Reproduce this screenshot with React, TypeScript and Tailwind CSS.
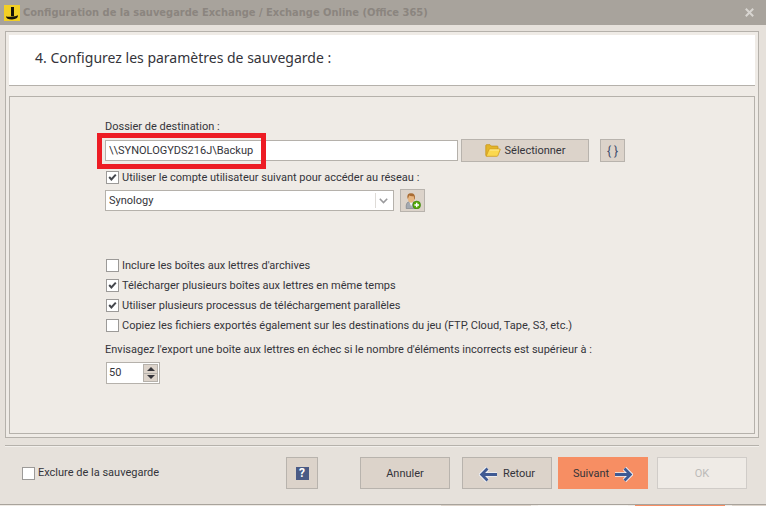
// App.tsx
import { useState } from 'react';
import type { ReactNode } from 'react';

interface OptionProps {
  label: string;
  defaultChecked?: boolean;
}

const BUTTON = 'flex items-center justify-center border border-[#b8b3ad] bg-[#dcd3ca]';

function Option({ label, defaultChecked = false }: OptionProps) {
  return (
    <label className="flex h-[19px] w-fit items-center gap-[3px] whitespace-nowrap">
      <span className="relative block h-[13px] w-[13px] shrink-0">
        <input
          type="checkbox"
          defaultChecked={defaultChecked}
          className="peer block h-[13px] w-[13px] appearance-none border border-[#9c9a98] bg-white"
        />
        <svg viewBox="0 0 13 13" className="pointer-events-none absolute inset-0 hidden peer-checked:block" fill="none" stroke="#45474d" strokeWidth="2">
          <path d="M3.2 6 5.4 8.4 9.8 3.6" />
        </svg>
      </span>
      {label}
    </label>
  );
}

function FolderIcon() {
  return (
    <svg width="16" height="13" viewBox="0 0 16 13">
      <path d="M.8 11.5V1.5Q.8.7 1.6.7H5l1.4 1.4h5.8q.8 0 .8.8V5L3 11.8Z" fill="#e3b52b" stroke="#c8951d" strokeWidth=".8" />
      <path d="M1.2 12.3 3.9 5.6Q4.1 5 4.8 5h10q.7 0 .4.7L12.9 11.6q-.3.7-1 .7Z" fill="#fbd84e" stroke="#d09c20" strokeWidth=".8" />
      <path d="M4.8 6h9.2" stroke="#fff0a0" strokeWidth=".9" />
    </svg>
  );
}

function AddUserIcon() {
  return (
    <svg width="16" height="16" viewBox="0 0 16 16">
      <path d="M1.2 15.5Q.8 9.5 3.5 9h5q2.7.5 2.5 6.5Z" fill="#a4a9b0" stroke="#777d86" strokeWidth=".6" />
      <path d="m4.3 8.8 1.9 4.7L8 8.8Z" fill="#f0f1f3" />
      <path d="M2.8 2.5h6.6v3.6Q8.8 9.8 6.1 9.8 3.4 9.8 2.8 6.1Z" fill="#e8b681" />
      <path d="M2.5 5.4Q1.5.3 6 .2q4.8 0 3.8 5.6L9.2 7 8.8 3.2Q5 3.4 4.2 2.6L3 5.4Z" fill="#a96b32" />
      <circle cx="11.7" cy="12" r="3.9" fill="#55a80a" stroke="#2f7900" strokeWidth=".5" />
      <path d="M11.7 9.7v4.6M9.4 12H14" stroke="#fff" strokeWidth="1.4" />
    </svg>
  );
}

function ArrowIcon({ back = false }: { back?: boolean }) {
  const shaft = back ? 'M18 7.5H2.5M8.5 1.5 2.6 7.5l5.9 6' : 'M2 7.5h15.5M11.5 1.5l5.9 6-5.9 6';
  return (
    <svg width="20" height="15" viewBox="0 0 20 15" fill="none">
      <path d={shaft} stroke="#f1f3f8" strokeWidth="4.6" />
      <path d={shaft} stroke="#3f5a93" strokeWidth="2.8" />
    </svg>
  );
}

function FooterButton({ children, className }: { children: ReactNode; className: string }) {
  return (
    <button type="button" className={`flex h-8 w-[90px] items-center justify-center gap-1 border pt-0.5 ${className}`}>
      {children}
    </button>
  );
}

export default function App() {
  const [folder, setFolder] = useState('\\\\SYNOLOGYDS216J\\Backup');
  const [limit, setLimit] = useState(50);

  return (
    <div className="bg-[#e6e1db] font-['Roboto','Liberation_Sans',sans-serif] text-[11px] leading-4 text-[#34343a]">
      {/* Title bar */}
      <header className="flex h-[25px] items-center bg-[#a8a39c] pr-3 pl-1">
        <svg width="16" height="16" viewBox="0 0 16 16" className="mr-[3px]">
          <rect width="16" height="16" fill="#f2cf25" />
          <path d="M7 2h3v9H7Z" fill="#15130b" />
          <path d="M2 11.2Q4 12.2 8 11.6q3.5-.1 6-1.4.2 4-6 4.2-5.8 0-6-3.2Z" fill="#15130b" />
        </svg>
        <h1 className="grow font-['DejaVu_Sans_Condensed','DejaVu_Sans',sans-serif] font-bold text-[#8b857f]">
          Configuration de la sauvegarde Exchange / Exchange Online (Office 365)
        </h1>
        <button type="button" aria-label="Fermer">
          <svg width="9" height="9" viewBox="0 0 9 9" stroke="#d8d5d1" strokeWidth="2">
            <path d="m.8.8 7.4 7.4M8.2.8.8 8.2" />
          </svg>
        </button>
      </header>

      {/* Wizard page */}
      <main className="mx-[5px] mt-1.5 mr-[7px] border border-[#b5b1ab] bg-[#efebe6] p-[3px]">
        <div className="flex h-[51px] items-center border-b border-[#b5b1ab] bg-white pb-1 pl-[26px]">
          <h2 className="font-['Noto_Sans','Open_Sans',sans-serif] text-sm">4. Configurez les paramètres de sauvegarde :</h2>
        </div>

        <div className="mt-2.5 border border-[#b5b1ab] pt-[22px] pb-[49px] pl-[95px]">
          <label htmlFor="folder" className="block">Dossier de destination :</label>
          <div className="mt-1 flex items-center">
            <div className="relative w-[353px]">
              <input
                id="folder"
                value={folder}
                onChange={(e) => setFolder(e.target.value)}
                className="block h-[21px] w-full border border-[#b5b1ab] bg-white px-[3px]"
              />
              <div className="pointer-events-none absolute -top-[7px] -left-2 h-9 w-[169px] border-5 border-[#ed1c24]" />
            </div>
            <button type="button" className={`${BUTTON} ml-[3px] h-[23px] w-32 gap-1`}>
              <FolderIcon />
              Sélectionner
            </button>
            <button type="button" className={`${BUTTON} ml-[11px] h-[23px] w-[25px] text-xs text-[#3c4c6c]`}>{'{ }'}</button>
          </div>

          <div className="mt-1.5 pl-px">
            <Option label="Utiliser le compte utilisateur suivant pour accéder au réseau :" defaultChecked />
          </div>
          <div className="mt-0.5 flex items-center gap-1.5">
            <div className="relative w-[289px]">
              <select aria-label="Compte utilisateur" className="block h-[21px] w-full appearance-none border border-[#b5b1ab] bg-white px-[3px]">
                <option>Synology</option>
              </select>
              <span className="pointer-events-none absolute top-[3px] right-[3px] flex h-[15px] w-4 items-center justify-center border-l border-[#dedbd7]">
                <svg width="9" height="6" viewBox="0 0 9 6" fill="none" stroke="#9a9a9c" strokeWidth="1.6">
                  <path d="m.8.8 3.7 3.7L8.2.8" />
                </svg>
              </span>
            </div>
            <button type="button" aria-label="Ajouter un compte" className={`${BUTTON} h-[23px] w-[25px]`}>
              <AddUserIcon />
            </button>
          </div>

          <div className="mt-11 flex flex-col gap-px pl-px">
            <Option label="Inclure les boîtes aux lettres d'archives" />
            <Option label="Télécharger plusieurs boîtes aux lettres en même temps" defaultChecked />
            <Option label="Utiliser plusieurs processus de téléchargement parallèles" defaultChecked />
            <Option label="Copiez les fichiers exportés également sur les destinations du jeu (FTP, Cloud, Tape, S3, etc.)" />
          </div>

          <label htmlFor="limit" className="mt-[7px] block whitespace-nowrap">
            Envisagez l'export une boîte aux lettres en échec si le nombre d'éléments incorrects est supérieur à :
          </label>
          <div className="mt-1 pl-px">
            <div className="flex h-[22px] w-[54px] border border-[#b5b1ab] bg-white p-px">
              <input
                id="limit"
                value={limit}
                onChange={(e) => setLimit(Number(e.target.value) || 0)}
                className="w-0 grow px-px"
              />
              <div className="flex w-[15px] flex-col border border-[#b5b1ab] bg-[#dcd3ca]">
                <button type="button" aria-label="Augmenter" onClick={() => setLimit(limit + 1)} className="flex grow items-center justify-center border-b border-[#b5b1ab]">
                  <svg width="8" height="4" viewBox="0 0 8 4" fill="#34343a"><path d="M0 4 4 0l4 4Z" /></svg>
                </button>
                <button type="button" aria-label="Diminuer" onClick={() => setLimit(limit - 1)} className="flex grow items-center justify-center">
                  <svg width="8" height="4" viewBox="0 0 8 4" fill="#34343a"><path d="m0 0 4 4 4-4Z" /></svg>
                </button>
              </div>
            </div>
          </div>
        </div>
      </main>

      {/* Actions */}
      <footer className="mt-[7px] mr-[7px] ml-[5px] flex border-t border-[#b5b1ab] pt-[11px] pr-3 pb-[15px] pl-[17px] inset-shadow-[0_1px_0_#f2efeb]">
        <div className="flex grow items-center">
          <Option label="Exclure de la sauvegarde" />
        </div>
        <button type="button" aria-label="Aide" className={`${BUTTON} mr-[42px] h-8 w-8`}>
          <span className="flex h-[13px] w-[13px] items-center justify-center bg-[#4a5a85] text-xs font-bold text-white">?</span>
        </button>
        <FooterButton className="mr-3 border-[#b8b3ad] bg-[#dcd3ca]">Annuler</FooterButton>
        <FooterButton className="mr-1.5 border-[#b8b3ad] bg-[#dcd3ca]"><ArrowIcon back />Retour</FooterButton>
        <FooterButton className="mr-[9px] border-[#f78e63] bg-[#f78e63]">Suivant<ArrowIcon /></FooterButton>
        <FooterButton className="border-[#d0ccc8] bg-[#efebe6] text-[#bcbab8]">OK</FooterButton>
      </footer>
      <div className="h-px bg-[#a8a39c]" />

      {/* Edge of the window underneath */}
      <div className="flex h-px justify-end gap-[7px] bg-[#efebe6]">
        <div className="w-[90px] bg-[#dcd3ca]" />
        <div className="w-[90px] bg-[#f6f4f1]" />
        <div className="w-[90px] bg-[#f78e63]" />
        <div className="w-[34px] bg-[#dcd3ca]" />
      </div>
    </div>
  );
}
